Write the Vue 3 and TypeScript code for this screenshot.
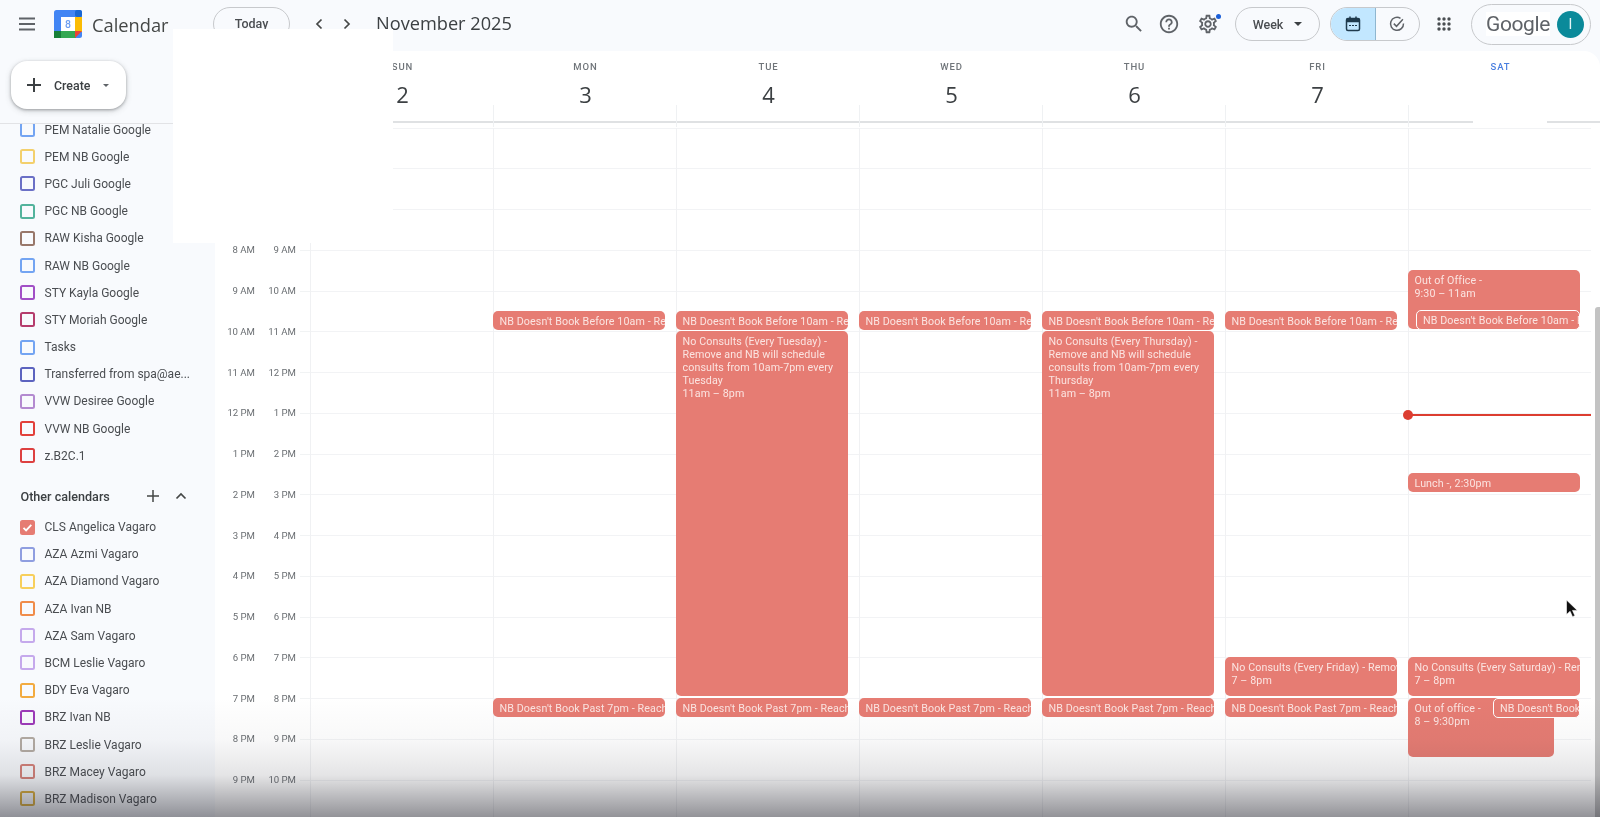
<script setup lang="ts">
interface Cal { name: string; color: string; checked?: boolean }
interface Ev {
  day: number
  y: number
  h: number
  x?: number
  w?: number
  title: string
  time?: string
  wrap?: boolean
  outlined?: boolean
}

const myCalendars: Cal[] = [
  { name: 'PEM Natalie Google', color: '#73a4f2' },
  { name: 'PEM NB Google', color: '#f3d06c' },
  { name: 'PGC Juli Google', color: '#6b70c6' },
  { name: 'PGC NB Google', color: '#52b39c' },
  { name: 'RAW Kisha Google', color: '#98776a' },
  { name: 'RAW NB Google', color: '#73a4f2' },
  { name: 'STY Kayla Google', color: '#a14fc6' },
  { name: 'STY Moriah Google', color: '#b53c6c' },
  { name: 'Tasks', color: '#73a4f2' },
  { name: 'Transferred from spa@ae...', color: '#5c63bf' },
  { name: 'VVW Desiree Google', color: '#b38ad0' },
  { name: 'VVW NB Google', color: '#e2403a' },
  { name: 'z.B2C.1', color: '#dd4040' },
]

const otherCalendars: Cal[] = [
  { name: 'CLS Angelica Vagaro', color: '#e67c73', checked: true },
  { name: 'AZA Azmi Vagaro', color: '#8f9ee0' },
  { name: 'AZA Diamond Vagaro', color: '#f7cf5c' },
  { name: 'AZA Ivan NB', color: '#f08c4a' },
  { name: 'AZA Sam Vagaro', color: '#c5a9ec' },
  { name: 'BCM Leslie Vagaro', color: '#c5a9ec' },
  { name: 'BDY Eva Vagaro', color: '#f2ab40' },
  { name: 'BRZ Ivan NB', color: '#9c3ab8' },
  { name: 'BRZ Leslie Vagaro', color: '#b3aba3' },
  { name: 'BRZ Macey Vagaro', color: '#d5827a' },
  { name: 'BRZ Madison Vagaro', color: '#d9ad3c' },
]

const days = [
  { label: 'SUN', num: '2' },
  { label: 'MON', num: '3' },
  { label: 'TUE', num: '4' },
  { label: 'WED', num: '5' },
  { label: 'THU', num: '6' },
  { label: 'FRI', num: '7' },
  { label: 'SAT', num: '8' },
]

const hourLabels = ['5 AM', '6 AM', '7 AM', '8 AM', '9 AM', '10 AM', '11 AM', '12 PM', '1 PM', '2 PM', '3 PM', '4 PM', '5 PM', '6 PM', '7 PM', '8 PM', '9 PM', '10 PM']
const hours = hourLabels.slice(0, 17).map((h, i) => ({ left: h, right: hourLabels[i + 1] }))

const nbBefore = "NB Doesn't Book Before 10am - Remove and NB will schedule"
const nbPast = "NB Doesn't Book Past 7pm - Reach out"
const tallTime = '11am – 8pm'

const events: Ev[] = [
  { day: 1, y: 311, h: 18.5, title: nbBefore },
  { day: 2, y: 311, h: 18.5, title: nbBefore },
  { day: 3, y: 311, h: 18.5, title: nbBefore },
  { day: 4, y: 311, h: 18.5, title: nbBefore },
  { day: 5, y: 311, h: 18.5, title: nbBefore },
  { day: 2, y: 331, h: 365, wrap: true, title: 'No Consults (Every Tuesday) - Remove and NB will schedule consults from 10am-7pm every Tuesday', time: tallTime },
  { day: 4, y: 331, h: 365, wrap: true, title: 'No Consults (Every Thursday) - Remove and NB will schedule consults from 10am-7pm every Thursday', time: tallTime },
  { day: 1, y: 698, h: 18.5, title: nbPast },
  { day: 2, y: 698, h: 18.5, title: nbPast },
  { day: 3, y: 698, h: 18.5, title: nbPast },
  { day: 4, y: 698, h: 18.5, title: nbPast },
  { day: 5, y: 698, h: 18.5, title: nbPast },
  { day: 5, y: 657, h: 39, title: 'No Consults (Every Friday) - Remove and NB', time: '7 – 8pm' },
  { day: 6, y: 657, h: 39, title: 'No Consults (Every Saturday) - Remove and NB', time: '7 – 8pm' },
  { day: 6, y: 270, h: 59, title: 'Out of Office -', time: '9:30 – 11am' },
  { day: 6, y: 310, h: 19.5, x: 7, w: 164, outlined: true, title: nbBefore },
  { day: 6, y: 473, h: 19, title: 'Lunch -, 2:30pm' },
  { day: 6, y: 698, h: 59, w: 146, title: 'Out of office -', time: '8 – 9:30pm' },
  { day: 6, y: 698, h: 19.5, x: 84, w: 87, outlined: true, title: nbPast },
]

const gridTop = 127.5

function eventsFor(day: number) {
  return events.filter(e => e.day === day)
}

function eventStyle(e: Ev) {
  return {
    top: `${e.y - gridTop}px`,
    height: `${e.h}px`,
    left: `${e.x ?? -1}px`,
    width: `${e.w ?? 172}px`,
  }
}
</script>

<template>
  <div class="screen">
    <header class="topbar">
      <button class="icon-btn menu">
        <svg width="18" height="14" viewBox="0 0 18 14"><path d="M1 1.5h16M1 7h16M1 12.5h16" stroke="#5f6368" stroke-width="2" /></svg>
      </button>
      <svg class="logo" width="28" height="28" viewBox="0 0 28 28">
        <rect width="28" height="28" rx="2.5" fill="#4285f4" />
        <rect x="21" y="7" width="7" height="15" fill="#fbbc04" />
        <rect x="0" y="21" width="22" height="7" fill="#34a853" />
        <rect x="0" y="21" width="7" height="7" fill="#188038" />
        <rect x="21" y="0" width="7" height="7" rx="2" fill="#1967d2" />
        <path d="M21 28v-7h7z" fill="#ea4335" />
        <rect x="7" y="7" width="14" height="14" fill="#fff" />
        <text x="14" y="18" font-size="10.5" font-weight="500" text-anchor="middle" fill="#6d9ef0" font-family="Roboto, sans-serif">8</text>
      </svg>
      <span class="brand">Calendar</span>
      <button class="pill today">Today</button>
      <button class="icon-btn chev">
        <svg width="10" height="12" viewBox="0 0 10 12"><path d="M7.5 1.5 3 6l4.5 4.5" fill="none" stroke="#444746" stroke-width="1.7" /></svg>
      </button>
      <button class="icon-btn chev">
        <svg width="10" height="12" viewBox="0 0 10 12"><path d="M2.5 1.5 7 6l-4.5 4.5" fill="none" stroke="#444746" stroke-width="1.7" /></svg>
      </button>
      <span class="month">November 2025</span>

      <div class="top-right">
        <svg class="tool" width="22" height="22" viewBox="0 0 24 24" fill="#5f6368"><path d="M15.5 14h-.79l-.28-.27C15.41 12.59 16 11.11 16 9.5 16 5.91 13.09 3 9.5 3S3 5.91 3 9.5 5.91 16 9.5 16c1.61 0 3.09-.59 4.23-1.57l.27.28v.79l5 4.99L20.49 19l-4.99-5zm-6 0C7.01 14 5 11.99 5 9.5S7.01 5 9.5 5 14 7.01 14 9.5 11.99 14 9.5 14z" /></svg>
        <svg class="tool help" width="22" height="22" viewBox="0 0 24 24" fill="#5f6368"><path d="M11 18h2v-2h-2v2zm1-16C6.48 2 2 6.48 2 12s4.48 10 10 10 10-4.48 10-10S17.52 2 12 2zm0 18c-4.41 0-8-3.59-8-8s3.59-8 8-8 8 3.59 8 8-3.59 8-8 8zm0-14c-2.21 0-4 1.79-4 4h2c0-1.1.9-2 2-2s2 .9 2 2c0 2-3 1.75-3 5h2c0-2.25 3-2.5 3-5 0-2.21-1.79-4-4-4z" /></svg>
        <span class="gear-wrap">
          <svg width="22" height="22" viewBox="0 0 24 24" fill="#5f6368"><path d="M19.43 12.98c.04-.32.07-.64.07-.98 0-.34-.03-.66-.07-.98l2.11-1.65c.19-.15.24-.42.12-.64l-2-3.46c-.09-.16-.26-.25-.44-.25-.06 0-.12.01-.17.03l-2.49 1c-.52-.4-1.08-.73-1.69-.98l-.38-2.65C14.46 2.18 14.25 2 14 2h-4c-.25 0-.46.18-.49.42l-.38 2.65c-.61.25-1.17.59-1.69.98l-2.49-1c-.06-.02-.12-.03-.18-.03-.17 0-.34.09-.43.25l-2 3.46c-.13.22-.07.49.12.64l2.11 1.65c-.04.32-.07.65-.07.98 0 .33.03.66.07.98l-2.11 1.65c-.19.15-.24.42-.12.64l2 3.46c.09.16.26.25.44.25.06 0 .12-.01.17-.03l2.49-1c.52.4 1.08.73 1.69.98l.38 2.65c.03.24.24.42.49.42h4c.25 0 .46-.18.49-.42l.38-2.65c.61-.25 1.17-.59 1.69-.98l2.49 1c.06.02.12.03.18.03.17 0 .34-.09.43-.25l2-3.46c.12-.22.07-.49-.12-.64l-2.11-1.65zm-1.98-1.71c.04.31.05.52.05.73 0 .21-.02.43-.05.73l-.14 1.13.89.7 1.08.84-.7 1.21-1.27-.51-1.04-.42-.9.68c-.43.32-.84.56-1.25.73l-1.06.43-.16 1.13-.2 1.35h-1.4l-.19-1.35-.16-1.13-1.06-.43c-.43-.18-.83-.41-1.23-.71l-.91-.7-1.06.43-1.27.51-.7-1.21 1.08-.84.89-.7-.14-1.13c-.03-.31-.05-.54-.05-.74s.02-.43.05-.73l.14-1.13-.89-.7-1.08-.84.7-1.21 1.27.51 1.04.42.9-.68c.43-.32.84-.56 1.25-.73l1.06-.43.16-1.13.2-1.35h1.39l.19 1.35.16 1.13 1.06.43c.43.18.83.41 1.23.71l.91.7 1.06-.43 1.27-.51.7 1.21-1.07.85-.89.7.14 1.13zM12 8c-2.21 0-4 1.79-4 4s1.79 4 4 4 4-1.79 4-4-1.79-4-4-4zm0 6c-1.1 0-2-.9-2-2s.9-2 2-2 2 .9 2 2-.9 2-2 2z" /></svg>
          <i class="gear-dot"></i>
        </span>
        <button class="pill week">Week <i class="caret"></i></button>
        <div class="toggle">
          <span class="toggle-cell on">
            <svg width="18" height="18" viewBox="0 0 18 18" fill="none" stroke="#1f3a4d" stroke-width="1.5"><rect x="2.5" y="3.5" width="13" height="12" rx="1.5" /><path d="M2.5 5.5h13" stroke-width="3.5" /><path d="M6 1.5v2M12 1.5v2" /><path d="M5 10.5h8" stroke-width="1" stroke-dasharray="2 1" /></svg>
          </span>
          <span class="toggle-cell">
            <svg width="18" height="18" viewBox="0 0 18 18" fill="none" stroke="#5f6368" stroke-width="1.5"><path d="M15.5 8.5a6.5 6.5 0 1 1-3-5.2" /><path d="m5.8 8.6 2.7 2.7 6.4-7" /></svg>
          </span>
        </div>
        <svg class="apps" width="14" height="14" viewBox="0 0 14 14" fill="#4a4e52">
          <template v-for="cy in [2, 7, 12]" :key="cy">
            <circle v-for="cx in [2, 7, 12]" :key="cx" :cx="cx" :cy="cy" r="1.7" />
          </template>
        </svg>
        <div class="account">
          <span class="google">Google</span>
          <span class="avatar">I</span>
        </div>
      </div>
    </header>

    <div class="body">
      <aside class="sidebar">
        <div class="create-area">
          <button class="create">
            <svg width="16" height="16" viewBox="0 0 16 16"><path d="M8 1v14M1 8h14" stroke="#3c4043" stroke-width="2" /></svg>
            <span class="create-text">Create</span>
            <i class="caret small"></i>
          </button>
        </div>
        <div class="cal-list">
          <div v-for="c in myCalendars" :key="c.name" class="cal-row">
            <span class="check" :style="{ borderColor: c.color }"></span>
            <span class="cal-name">{{ c.name }}</span>
          </div>
          <div class="cal-heading">
            <span>Other calendars</span>
            <svg class="head-plus" width="14" height="14" viewBox="0 0 14 14"><path d="M7 1v12M1 7h12" stroke="#444746" stroke-width="1.5" /></svg>
            <svg class="head-up" width="12" height="8" viewBox="0 0 12 8"><path d="M1.5 6.5 6 2l4.5 4.5" fill="none" stroke="#444746" stroke-width="1.7" /></svg>
          </div>
          <div v-for="c in otherCalendars" :key="c.name" class="cal-row">
            <span class="check" :style="{ borderColor: c.color, background: c.checked ? c.color : 'transparent' }">
              <svg v-if="c.checked" width="11" height="11" viewBox="0 0 11 11"><path d="m1.5 5.8 2.6 2.6 5.2-5.6" fill="none" stroke="#fff" stroke-width="1.8" /></svg>
            </span>
            <span class="cal-name">{{ c.name }}</span>
          </div>
        </div>
      </aside>

      <main class="main">
        <div class="day-header">
          <div class="head-gutter"></div>
          <div v-for="(d, i) in days" :key="d.label" class="day-head" :class="{ first: i === 0 }">
            <span class="dow" :class="{ sat: d.label === 'SAT' }">{{ d.label }}</span>
            <span class="dnum">{{ d.num }}</span>
          </div>
        </div>
        <div class="grid">
          <div class="gutter">
            <div v-for="h in hours" :key="h.left" class="gutter-row">
              <span class="tz">{{ h.left }}</span>
              <span class="tz">{{ h.right }}</span>
            </div>
          </div>
          <div v-for="(d, i) in days" :key="d.label" class="day">
            <div v-for="h in hours" :key="h.left" class="hour"></div>
            <div
              v-for="(e, n) in eventsFor(i)"
              :key="n"
              class="event"
              :class="{ outlined: e.outlined, nowrap: !e.wrap }"
              :style="eventStyle(e)"
            >
              <div class="ev-title">{{ e.title }}</div>
              <div v-if="e.time" class="ev-time">{{ e.time }}</div>
            </div>
            <div v-if="i === 6" class="now-line"><i class="now-dot"></i></div>
          </div>
        </div>
        <div class="scrollbar"></div>
      </main>
    </div>

    <!-- blanked out areas in the recording -->
    <div class="blank blank-left"></div>
    <div class="blank blank-right"></div>

    <svg class="cursor" width="14" height="20" viewBox="0 0 14 20"><path d="M1.5 1v14.5l3.6-3.2 2.4 5.4 2.4-1-2.4-5.3h4.8z" fill="#111" stroke="#fff" stroke-width=".6" /></svg>
    <div class="fade"></div>
  </div>
</template>

<style>
html, body {
  margin: 0;
  background: #fff;
}
</style>

<style scoped>
.screen {
  position: relative;
  width: 1600px;
  height: 817px;
  overflow: hidden;
  display: flex;
  flex-direction: column;
  background: #f8fafd;
  color: #3c4043;
  font-family: Roboto, "Liberation Sans", sans-serif;
  filter: blur(0.6px);
}

button {
  font-family: inherit;
  background: none;
  border: 0;
  padding: 0;
}

.topbar {
  height: 51px;
  flex: none;
  display: flex;
  align-items: center;
  padding-bottom: 3px;
  box-sizing: border-box;
}

.icon-btn {
  display: flex;
  align-items: center;
  justify-content: center;
}

.menu {
  margin-left: 18px;
  width: 18px;
}

.logo {
  margin-left: 18px;
}

.brand {
  margin-left: 10px;
  font-family: "Open Sans", sans-serif;
  font-size: 18.3px;
  color: #444746;
  width: 121px;
}

.pill {
  height: 34px;
  border: 1.5px solid #c7c9cc;
  border-radius: 17px;
  box-sizing: border-box;
  font-size: 12.5px;
  font-weight: 500;
  color: #4a4d51;
}

.today {
  width: 77px;
  padding-bottom: 2px;
}

.chev {
  width: 10px;
}

.today + .chev {
  margin-left: 24px;
}

.chev + .chev {
  margin-left: 18px;
}

.month {
  margin-left: 24px;
  margin-top: -2px;
  font-family: "Open Sans", sans-serif;
  font-size: 18.2px;
  color: #3c4043;
}

.top-right {
  margin-left: auto;
  margin-right: 9px;
  display: flex;
  align-items: center;
}

.tool {
  margin-left: -1px;
}

.help {
  margin-left: 13px;
}

.gear-wrap {
  position: relative;
  display: flex;
  margin-left: 17px;
}

.gear-dot {
  position: absolute;
  top: 1px;
  right: -2px;
  width: 5px;
  height: 5px;
  border-radius: 50%;
  background: #1a5fd8;
}

.week {
  width: 85px;
  margin-left: 16px;
  display: flex;
  align-items: center;
  justify-content: center;
  gap: 11px;
}

.caret {
  width: 0;
  height: 0;
  border-left: 4px solid transparent;
  border-right: 4px solid transparent;
  border-top: 4px solid #3c4043;
}

.toggle {
  margin-left: 10px;
  width: 90px;
  height: 34px;
  display: flex;
  box-sizing: border-box;
  border: 1.5px solid #c7c9cc;
  border-radius: 17px;
  overflow: hidden;
}

.toggle-cell {
  flex: 1;
  display: flex;
  align-items: center;
  justify-content: center;
}

.toggle-cell.on {
  background: #c2e7ff;
  border-right: 1px solid #8fb7d0;
}

.apps {
  margin-left: 17px;
}

.account {
  margin-left: 20px;
  width: 120px;
  height: 41px;
  box-sizing: border-box;
  border: 1.5px solid #c7c9cc;
  border-radius: 21px;
  display: flex;
  align-items: center;
  padding-left: 14px;
}

.google {
  font-size: 21px;
  color: #5f6368;
  background: #fff;
  letter-spacing: -0.4px;
}

.avatar {
  margin-left: auto;
  margin-right: 6px;
  width: 27px;
  height: 27px;
  border-radius: 50%;
  background: #0b8a9a;
  color: #e6f4f5;
  font-size: 14px;
  display: flex;
  align-items: center;
  justify-content: center;
}

.body {
  flex: 1;
  display: flex;
  min-height: 0;
}

.sidebar {
  width: 215px;
  flex: none;
  display: flex;
  flex-direction: column;
  overflow: hidden;
}

.create-area {
  height: 73px;
  flex: none;
  box-sizing: border-box;
  padding: 10px 0 0 11px;
  position: relative;
  z-index: 1;
  background: #f8fafd;
  border-bottom: 1px solid #e2e3e6;
}

.create {
  width: 115px;
  height: 48px;
  background: #fff;
  border-radius: 16px;
  box-shadow: 0 1px 3px rgba(60, 64, 67, 0.4), 0 2px 6px rgba(60, 64, 67, 0.2);
  display: flex;
  align-items: center;
  padding-left: 15px;
  box-sizing: border-box;
}

.create-text {
  margin-left: 12px;
  font-size: 12.4px;
  font-weight: 500;
  color: #3c4043;
}

.caret.small {
  margin-left: 13px;
  border-left-width: 3.5px;
  border-right-width: 3.5px;
  border-top-width: 3.5px;
  border-top-color: #5f6368;
}

.cal-list {
  margin-top: -8px;
}

.cal-row {
  height: 27.2px;
  display: flex;
  align-items: center;
  padding-left: 20px;
}

.check {
  width: 15px;
  height: 15px;
  box-sizing: border-box;
  border: 2px solid;
  border-radius: 2.5px;
  flex: none;
  display: flex;
  align-items: center;
  justify-content: center;
}

.cal-name {
  margin-left: 9.5px;
  font-size: 12px;
  color: #4a4d51;
  white-space: nowrap;
}

.cal-heading {
  margin-top: 10px;
  height: 34px;
  display: flex;
  align-items: center;
  padding-left: 20.5px;
  font-size: 12.6px;
  font-weight: 500;
  color: #3c4043;
}

.head-plus {
  margin-left: 36px;
}

.head-up {
  margin-left: 15px;
}

.main {
  flex: 1;
  min-width: 0;
  position: relative;
  background: #fff;
  border-top-right-radius: 16px;
  display: flex;
  flex-direction: column;
}

.day-header {
  height: 72px;
  flex: none;
  display: flex;
  box-sizing: border-box;
  border-bottom: 2px solid #dfe1e3;
}

.head-gutter {
  width: 95px;
  flex: none;
}

.day-head {
  width: 183px;
  flex: none;
  position: relative;
  display: flex;
  flex-direction: column;
  align-items: center;
  box-sizing: border-box;
  padding-left: 2px;
}

.day-head:not(.first)::before {
  content: "";
  position: absolute;
  left: 0;
  top: 54px;
  bottom: -6px;
  width: 1px;
  background: #eff1f3;
}

.dow {
  margin-top: 9.5px;
  font-size: 9.5px;
  font-weight: 500;
  letter-spacing: 0.9px;
  color: #70757a;
  line-height: 12px;
}

.dow.sat {
  color: #4a7fe0;
}

.dnum {
  margin-top: 6.5px;
  font-family: "Open Sans", sans-serif;
  font-size: 22px;
  line-height: 30px;
  color: #3c4043;
}

.grid {
  flex: 1;
  min-height: 0;
  display: flex;
  overflow: hidden;
  padding-top: 3.5px;
  margin-top: 1px;
}

.gutter {
  width: 95px;
  flex: none;
}

.gutter-row {
  height: 40.77px;
  box-sizing: border-box;
  position: relative;
  display: flex;
  justify-content: flex-end;
  gap: 13px;
  padding-right: 14px;
}

.gutter-row::after {
  content: "";
  position: absolute;
  top: 0;
  right: 0;
  width: 10px;
  height: 1px;
  background: #f1f3f4;
}

.tz {
  width: 28px;
  text-align: right;
  font-size: 9.6px;
  line-height: 14px;
  margin-top: -6.5px;
  color: #6a6e72;
  white-space: nowrap;
}

.day {
  width: 183px;
  flex: none;
  position: relative;
  box-sizing: border-box;
  border-left: 1px solid #f0f1f3;
}

.hour {
  height: 40.77px;
  box-sizing: border-box;
  border-top: 1px solid #f2f3f5;
}

.event {
  position: absolute;
  box-sizing: border-box;
  padding: 4px 0 0 6.5px;
  border-radius: 5px;
  background: #e67c73;
  color: #fbe4e1;
  font-size: 10.7px;
  line-height: 13px;
  overflow: hidden;
  letter-spacing: 0.1px;
}

.event.nowrap .ev-title {
  white-space: nowrap;
}

.event.outlined {
  border: 1px solid #fff;
  padding-top: 3px;
  padding-left: 6px;
}

.now-line {
  position: absolute;
  left: -1px;
  right: 0;
  top: 286.7px;
  height: 2px;
  background: #dc3d30;
}

.now-dot {
  position: absolute;
  left: -5px;
  top: -4px;
  width: 10px;
  height: 10px;
  border-radius: 50%;
  background: #dc3d30;
}

.scrollbar {
  position: absolute;
  right: 0;
  top: 256px;
  bottom: 0;
  width: 5px;
  border-radius: 3px 0 0 0;
  background: #c3c3c3;
}

.blank {
  position: absolute;
  z-index: 2;
  background: #fff;
}

.blank-left {
  left: 173px;
  top: 29px;
  width: 220px;
  height: 214px;
}

.blank-right {
  left: 1473px;
  top: 76px;
  width: 74px;
  height: 50px;
}

.cursor {
  position: absolute;
  z-index: 3;
  left: 1565px;
  top: 599px;
}

.fade {
  position: absolute;
  z-index: 3;
  left: 0;
  right: 0;
  bottom: 0;
  height: 120px;
  pointer-events: none;
  background: linear-gradient(to bottom, rgba(40, 40, 50, 0) 0%, rgba(40, 40, 50, 0.03) 35%, rgba(40, 40, 50, 0.12) 65%, rgba(40, 40, 50, 0.5) 100%);
}
</style>
